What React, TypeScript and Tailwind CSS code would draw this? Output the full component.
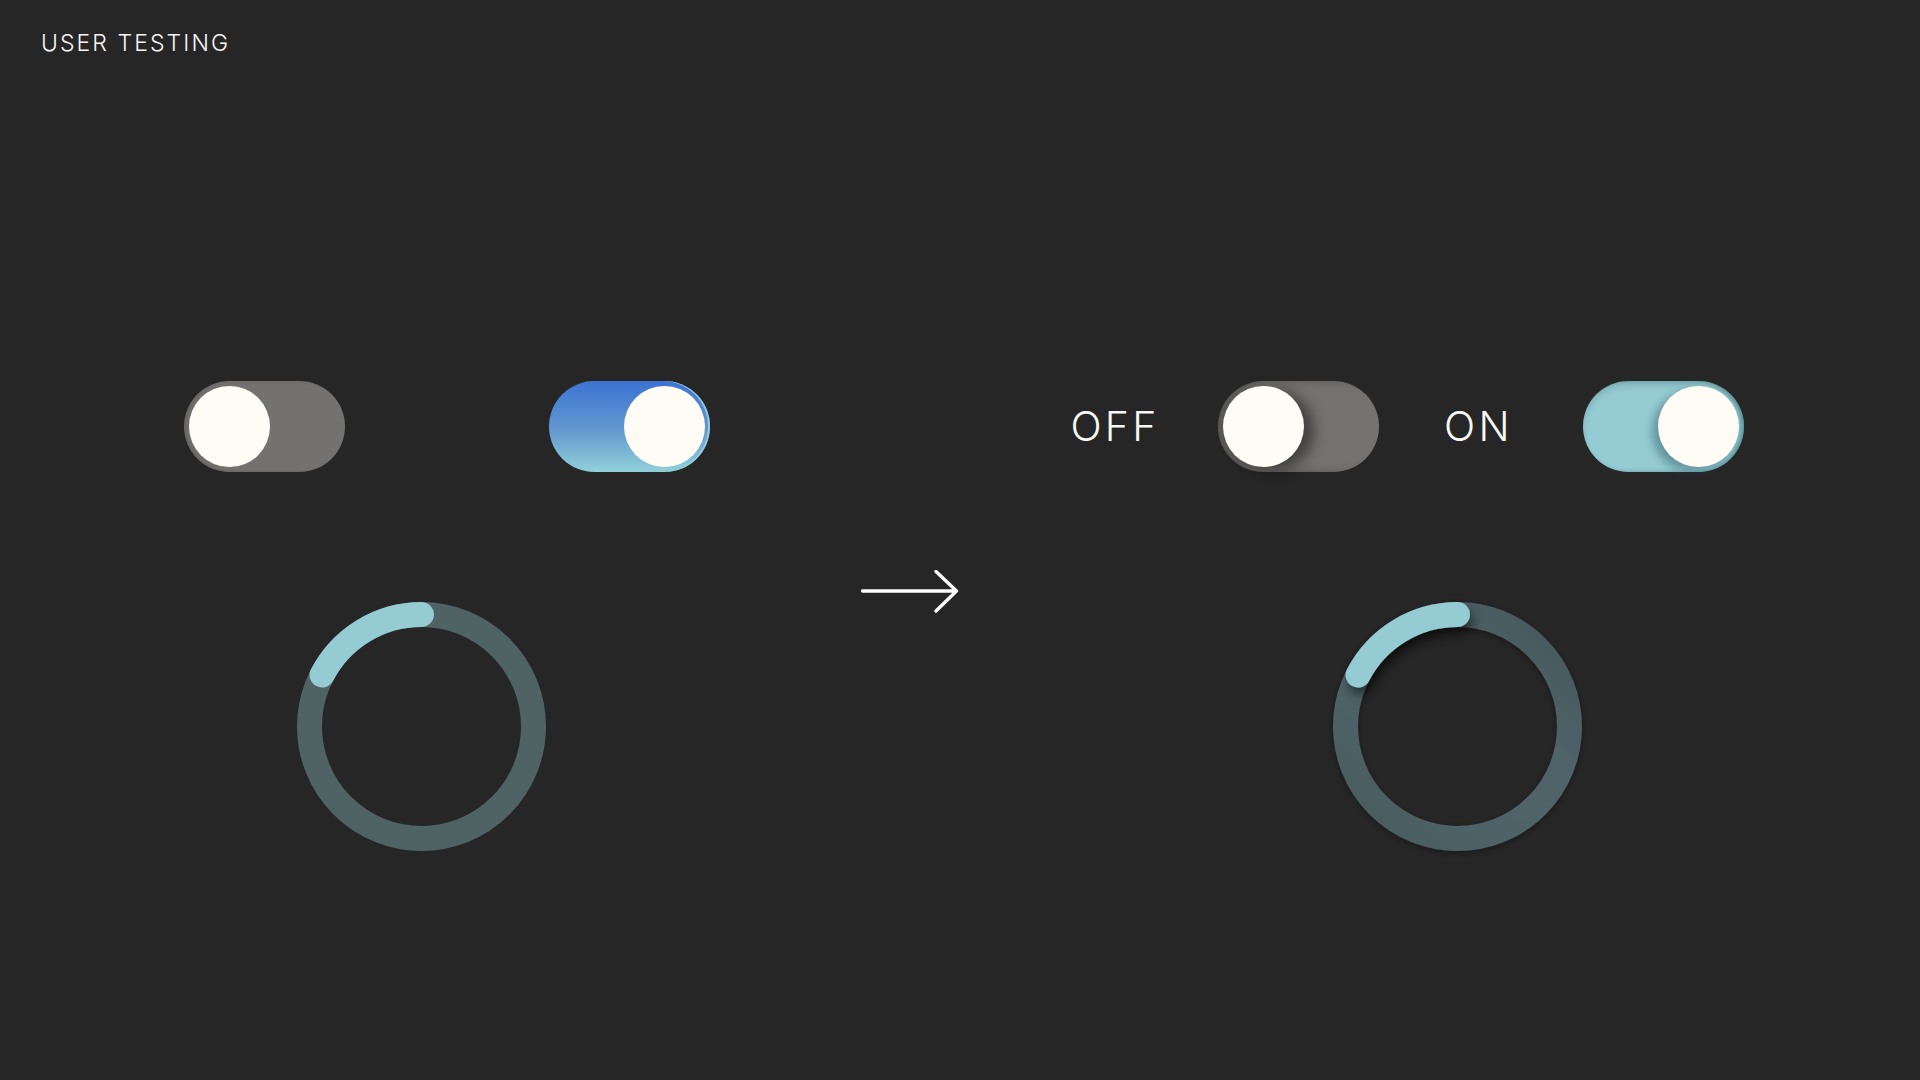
import React from "react";

function Toggle({ variant }: { variant: "off" | "on" | "off2" | "on2" }) {
  if (variant === "off") {
    return (
      <div className="w-[161px] h-[91px] rounded-full bg-[#737270] p-[5px] flex items-center justify-start shadow-[inset_3px_0_4px_rgba(0,0,0,0.12)]">
        <div className="w-[81px] h-[81px] rounded-full bg-[#fffcf5]" />
      </div>
    );
  }
  if (variant === "on") {
    return (
      <div className="w-[161px] h-[91px] rounded-full bg-gradient-to-b from-[#3c73d3] via-[#5f95cf] to-[#92d0d8] p-[5px] flex items-center justify-end shadow-[inset_-2px_0_0_rgba(150,210,220,0.9)]">
        <div className="w-[81px] h-[81px] rounded-full bg-[#fffcf5]" />
      </div>
    );
  }
  if (variant === "off2") {
    return (
      <div className="w-[161px] h-[91px] rounded-full bg-[#747371] p-[5px] flex items-center justify-start shadow-[inset_10px_0_10px_rgba(0,0,0,0.25)]">
        <div className="w-[81px] h-[81px] rounded-full bg-[#fffcf5] shadow-[10px_4px_14px_rgba(0,0,0,0.45)]" />
      </div>
    );
  }
  return (
    <div className="w-[161px] h-[91px] rounded-full bg-[#95cbd3] p-[5px] flex items-center justify-end shadow-[inset_0_5px_6px_rgba(0,0,0,0.1),inset_-3px_0_4px_rgba(40,90,100,0.45)]">
      <div className="w-[81px] h-[81px] rounded-full bg-[#fffcf5] shadow-[-6px_5px_8px_rgba(30,70,80,0.4)]" />
    </div>
  );
}

function Ring({ shaded }: { shaded?: boolean }) {
  const arc = "M 25.05 73 A 112 112 0 0 1 124.5 12.5";
  return (
    <svg width="249" height="249" viewBox="0 0 249 249" className="block overflow-visible">
      <defs>
        <filter id="arcShadow" x="-50%" y="-50%" width="200%" height="200%">
          <feDropShadow dx="3" dy="7" stdDeviation="6" floodColor="#000" floodOpacity="0.55" />
        </filter>
        <filter id="trackShadow" x="-20%" y="-20%" width="140%" height="140%">
          <feDropShadow dx="0" dy="2" stdDeviation="3" floodColor="#000" floodOpacity="0.35" />
        </filter>
        <linearGradient id="trackGrad" x1="1" y1="0" x2="0" y2="1">
          <stop offset="0" stopColor="#43555a" />
          <stop offset="0.35" stopColor="#50646a" />
          <stop offset="0.7" stopColor="#4e6266" />
          <stop offset="1" stopColor="#485a5d" />
        </linearGradient>
      </defs>
      <circle
        cx="124.5"
        cy="124.5"
        r="112"
        fill="none"
        stroke={shaded ? "url(#trackGrad)" : "#4f6264"}
        strokeWidth="25"
        filter={shaded ? "url(#trackShadow)" : undefined}
      />
      <path
        d={arc}
        fill="none"
        stroke="#95ccd4"
        strokeWidth="25"
        strokeLinecap="round"
        filter={shaded ? "url(#arcShadow)" : undefined}
      />
    </svg>
  );
}

export default function App() {
  return (
    <div
      className="w-[1920px] h-[1080px] bg-[#262626] overflow-hidden text-[#f7f7f5]"
      style={{ fontFamily: "Inter, 'Noto Sans', sans-serif" }}
    >
      <div className="pl-[41px] pt-[32px] h-[55px] text-[23px] leading-none tracking-[0.09em] font-light">
        USER TESTING
      </div>

      <div className="flex items-center mt-[326px] h-[91px]">
        <div className="ml-[184px]">
          <Toggle variant="off" />
        </div>
        <div className="ml-[204px]">
          <Toggle variant="on" />
        </div>
        <div className="ml-[362px] w-[86px] flex justify-center text-[41px] leading-none tracking-[0.08em] font-light whitespace-nowrap">
          OFF
        </div>
        <div className="ml-[60px]">
          <Toggle variant="off2" />
        </div>
        <div className="ml-[67px] w-[65px] flex justify-center text-[41px] leading-none tracking-[0.08em] font-light whitespace-nowrap">
          ON
        </div>
        <div className="ml-[72px]">
          <Toggle variant="on2" />
        </div>
      </div>

      <div className="flex items-start mt-[98px]">
        <div className="ml-[297px] mt-[32px]">
          <Ring />
        </div>
        <div className="ml-[315px]">
          <svg width="98" height="43" viewBox="0 0 98 43" className="block">
            <path
              d="M 1.5 21 L 95.5 21 M 75 1.5 L 95.5 21 L 75 41"
              fill="none"
              stroke="#ffffff"
              strokeWidth="3.3"
              strokeLinecap="round"
              strokeLinejoin="round"
            />
          </svg>
        </div>
        <div className="ml-[374px] mt-[32px]">
          <Ring shaded />
        </div>
      </div>
    </div>
  );
}
